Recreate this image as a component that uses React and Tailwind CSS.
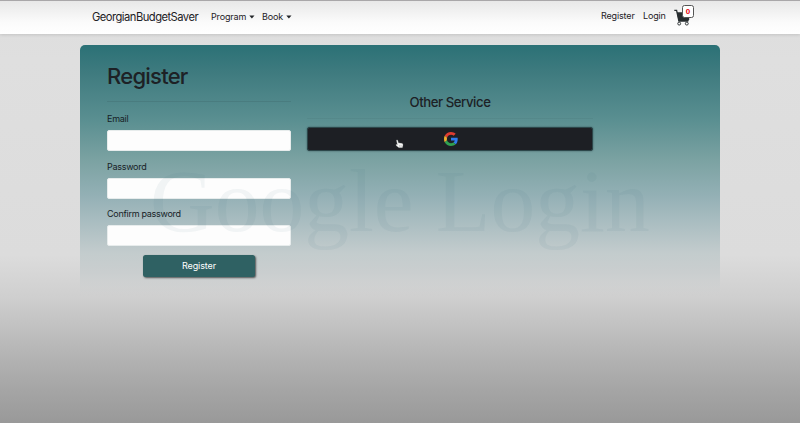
import React from "react";

function Caret() {
  return (
    <svg className="mb-px ml-[2.5px]" width="6" height="4" viewBox="0 0 6 4">
      <path d="M0.3 0.5h5.2L2.9 3.4z" fill="#222528" />
    </svg>
  );
}

function CartIcon() {
  return (
    <svg width="17" height="18" viewBox="0 0 17 18" fill="none">
      <path d="M2.8 3.2h12.4v7.6l-1 1.2H4.6z" fill="#272d2f" />
      <path d="M0.3 1.3h2.3L4.9 12.2h9.4" stroke="#272d2f" strokeWidth="1.3" />
      <circle cx="5.2" cy="14.6" r="1.45" stroke="#34393b" strokeWidth="1" fill="#fbfbfb" />
      <circle cx="12.8" cy="14.6" r="1.45" stroke="#34393b" strokeWidth="1" fill="#fbfbfb" />
    </svg>
  );
}

function GoogleIcon() {
  return (
    <svg className="ml-px" width="14" height="14" viewBox="0 0 48 48">
      <path fill="#df3c30" d="M24 9.5c3.54 0 6.71 1.22 9.21 3.6l6.85-6.85C35.9 2.38 30.47 0 24 0 14.62 0 6.51 5.38 2.56 13.22l7.98 6.19C12.43 13.72 17.74 9.5 24 9.5z" />
      <path fill="#2f7bee" d="M46.98 24.55c0-1.57-.15-3.09-.38-4.55H24v9.02h12.94c-.58 2.96-2.26 5.48-4.78 7.18l7.73 6c4.51-4.18 7.09-10.36 7.09-17.65z" />
      <path fill="#f0b02f" d="M10.53 28.59c-.48-1.45-.76-2.99-.76-4.59s.27-3.14.76-4.59l-7.98-6.19C.92 16.46 0 20.12 0 24c0 3.88.92 7.54 2.56 10.78l7.97-6.19z" />
      <path fill="#30a050" d="M24 48c6.48 0 11.93-2.13 15.89-5.81l-7.73-6c-2.15 1.45-4.92 2.3-8.16 2.3-6.26 0-11.57-4.22-13.47-9.91l-7.98 6.19C6.51 42.62 14.62 48 24 48z" />
    </svg>
  );
}

function Pointer() {
  return (
    <svg className="absolute left-[87px] top-[11px]" width="9" height="10" viewBox="0 0 9 10">
      <path d="M1.3 1.2Q2 .3 2.8 1.2L3.5 3.8l3.6.5Q8.2 4.7 8.1 6L7.5 8.8H3.8L1 6.4Q.5 5.3 1.6 5.3L2.3 5.6z" fill="#f6f6f6" stroke="#55585a" strokeWidth=".3" />
      <path d="M4.6 6v1.8M6.1 6v1.8" stroke="#888" strokeWidth=".4" />
    </svg>
  );
}

function Field({ label, type }) {
  return (
    <label className="flex h-[47.7px] flex-col">
      <span className="mb-[4px] h-[14px] text-[9px] leading-[13px] tracking-[-0.28px] text-[#172226]">{label}</span>
      <input type={type} className="h-[21px] w-full rounded-[2px] border border-[#e7ecec] bg-[#fdfdfd]" />
    </label>
  );
}

export default function App() {
  return (
    <div className="h-[423px] w-[800px] overflow-hidden bg-[linear-gradient(to_bottom,#dddddd_0px,#dfdfdf_60px,#dcdcdc_255px,#cfcfcf_297px,#b4b4b4_355px,#a5a5a5_390px,#999999_423px)] font-['Inter','Liberation_Sans',sans-serif] text-[#1d2125]">
      <nav className="flex h-[34px] items-start border-t border-[#a9a7a9] bg-[linear-gradient(to_bottom,#e8e8e8,#fbfbfb_65%,#ffffff)] pl-[92px] shadow-[0_1px_3px_rgba(0,0,0,0.12)]">
        <span className="mt-[8px] w-[119px] whitespace-nowrap text-[11.2px] leading-4 tracking-[-0.52px]">GeorgianBudgetSaver</span>
        <span className="mt-[8px] flex w-[51px] items-center text-[9px] leading-4 tracking-[-0.15px]">Program<Caret /></span>
        <span className="mt-[8px] flex items-center text-[9px] leading-4 tracking-[-0.15px]">Book<Caret /></span>
        <div className="ml-auto mr-[105px] flex">
          <span className="mt-[7px] w-[42px] text-[9px] leading-4 tracking-[-0.15px]">Register</span>
          <span className="mt-[7px] w-[31px] text-[9px] leading-4 tracking-[-0.15px]">Login</span>
          <div className="relative mt-[8px] w-[21px]">
            <CartIcon />
            <span className="absolute left-[8px] top-[-4px] flex h-[13px] w-[12px] items-center justify-center rounded-[2.5px] border border-[#555] bg-white font-['Liberation_Sans',sans-serif] text-[8px] font-bold leading-none text-[#e8000c]">0</span>
          </div>
        </div>
      </nav>

      <main className="relative mx-auto mt-[10.5px] h-[250.5px] w-[640px] rounded-t-[5px] bg-[linear-gradient(to_bottom,#2b7176_0px,#3f7b7f_28px,#5a8f91_75px,#7ba2a2_115px,#93b0b5_150px,#a8bcc0_175px,#c3cccd_208px,#cacecf_228px,rgba(207,207,207,0)_250px)] px-[27px] pt-[17.5px]">
        <div className="flex gap-4">
          <section className="w-[184px]">
            <h1 className="h-[28px] text-[22px] font-medium leading-[29px] tracking-[-0.75px]">Register</h1>
            <hr className="mt-[11px] border-[#1d2125]/10" />
            <form className="mt-[10px]">
              <Field label="Email" type="email" />
              <Field label="Password" type="password" />
              <Field label="Confirm password" type="password" />
              <button type="button" className="mx-auto block h-[22px] w-[112px] rounded-[2.5px] bg-[#2f6163] text-[9px] tracking-[-0.1px] text-white shadow-[1px_1px_2px_rgba(0,0,0,0.6)]">Register</button>
            </form>
          </section>
          <section className="w-[286px] pt-[32px]">
            <h2 className="h-[16px] text-center text-[13.2px] font-medium leading-[16px] tracking-[-0.45px]">Other Service</h2>
            <hr className="mt-[8px] border-[#1d2125]/5" />
            <button type="button" className="relative mt-[8px] flex h-[24px] w-full items-center justify-center rounded-[2.5px] border border-[#2c474a] bg-[#1d1f24] shadow-[0_0_1.5px_rgba(20,40,45,0.8)]">
              <GoogleIcon />
              <Pointer />
            </button>
          </section>
        </div>
        <div className="pointer-events-none absolute left-[70px] top-[106.5px] whitespace-nowrap font-['Liberation_Serif',serif] text-[89.5px] leading-[100px] text-[#2f6a70]/6">Google Login</div>
      </main>
    </div>
  );
}
